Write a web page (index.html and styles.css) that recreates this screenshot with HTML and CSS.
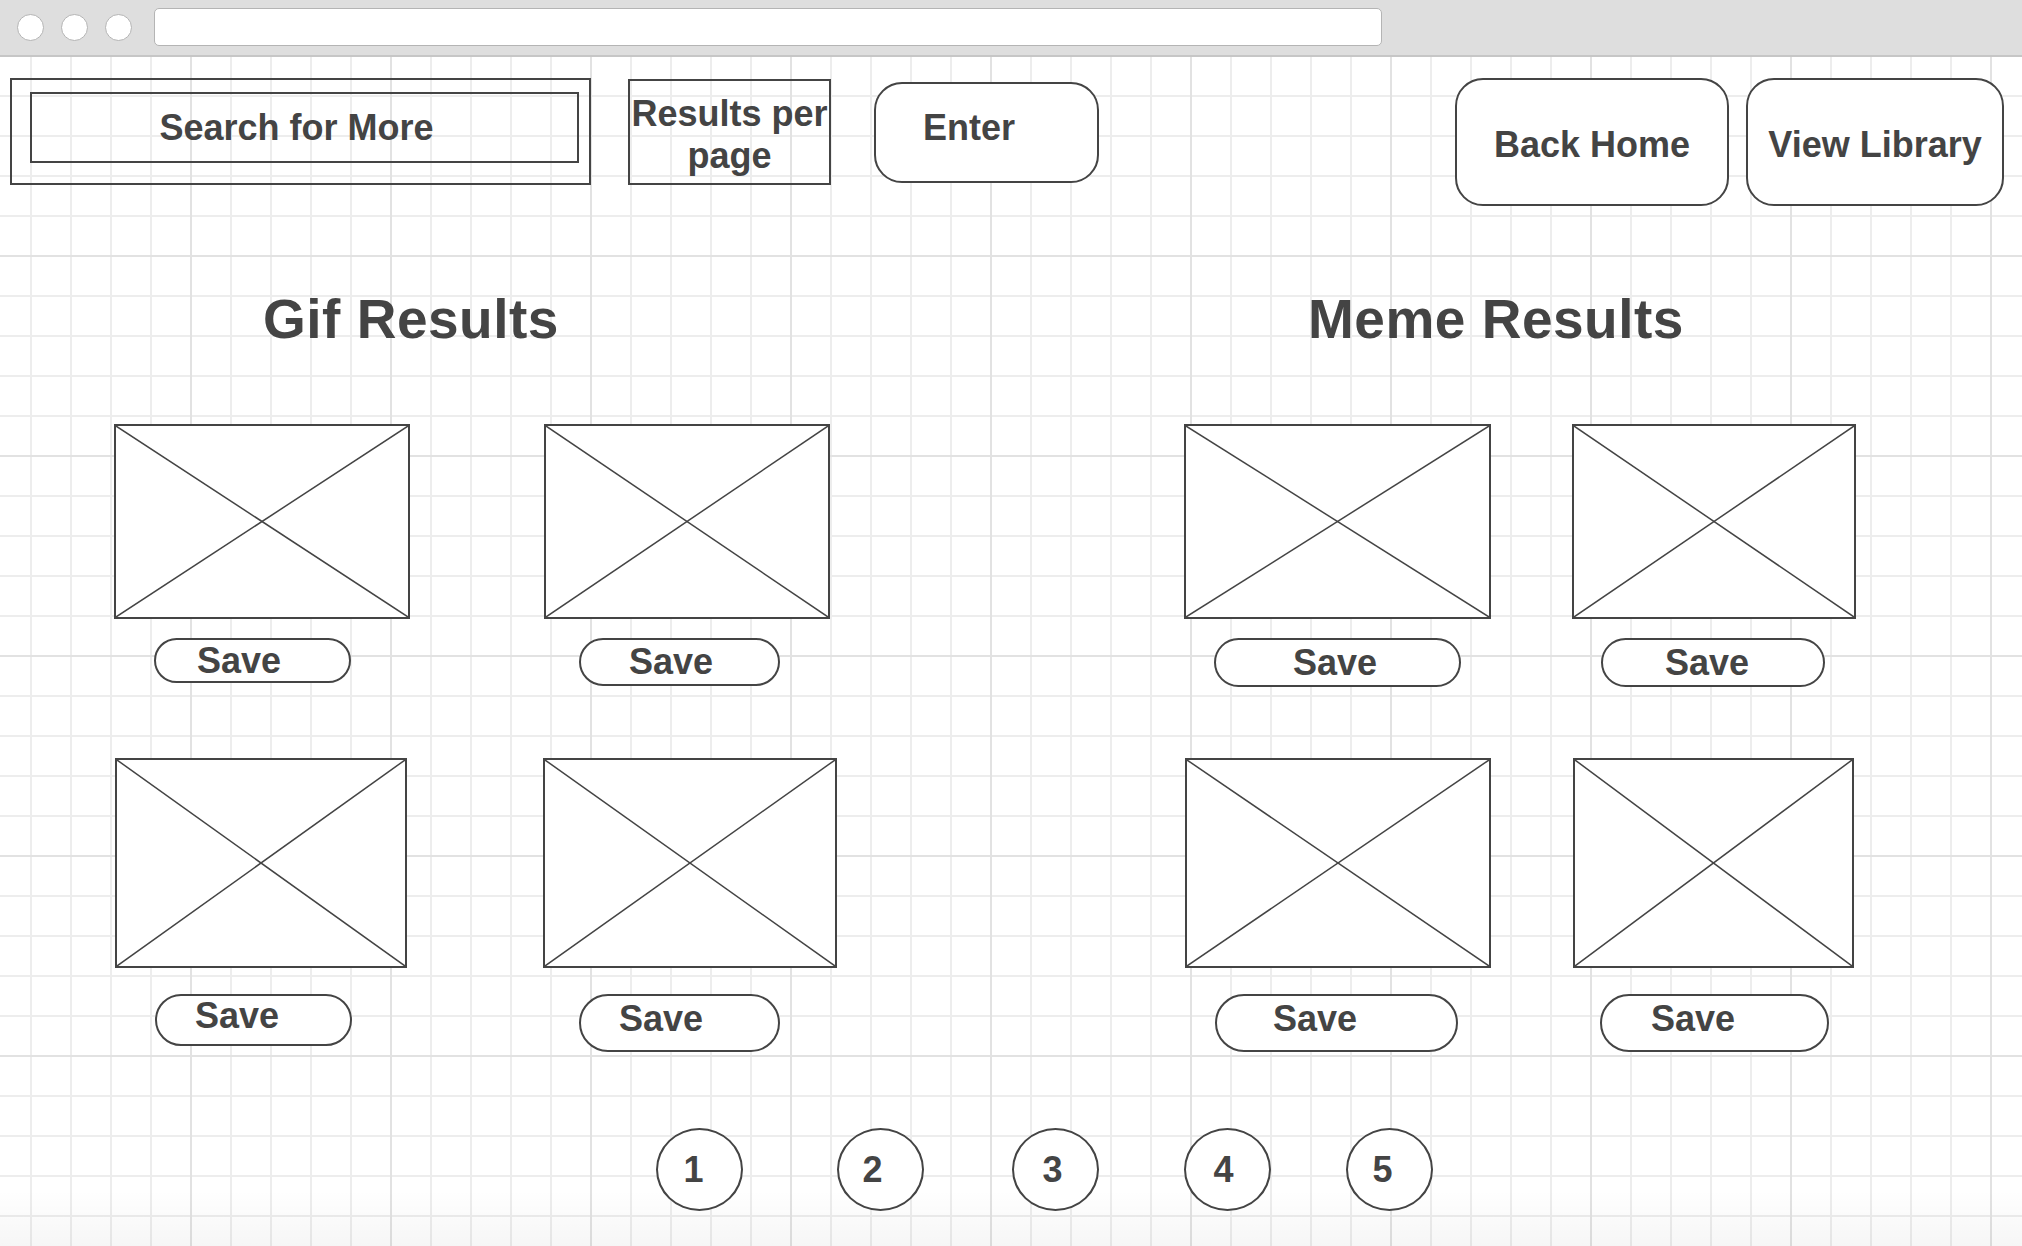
FILE: index.html
```html
<!DOCTYPE html>
<html lang="en">
<head>
<meta charset="utf-8">
<title>Search Results Wireframe</title>
<link rel="stylesheet" href="styles.css">
</head>
<body>
<div class="chrome">
  <span class="dot"></span><span class="dot"></span><span class="dot"></span>
  <div class="url"></div>
</div>
<main class="page">
  <header class="toolbar">
    <div class="search"><div class="search-inner">Search for More</div></div>
    <div class="rpp">Results per<br>page</div>
    <div class="btn enter">Enter</div>
    <div class="btn home">Back Home</div>
    <div class="btn library">View Library</div>
  </header>

  <div class="results">
    <section class="section gif">
      <h2 class="heading">Gif Results</h2>
      <div class="cards">
        <div class="card r1 g11">
          <div class="ph"><svg viewBox="0 0 100 100" preserveAspectRatio="none"><line x1="0" y1="0" x2="100" y2="100"/><line x1="100" y1="0" x2="0" y2="100"/></svg></div>
          <div class="save">Save</div>
        </div>
        <div class="card r1 g12">
          <div class="ph"><svg viewBox="0 0 100 100" preserveAspectRatio="none"><line x1="0" y1="0" x2="100" y2="100"/><line x1="100" y1="0" x2="0" y2="100"/></svg></div>
          <div class="save">Save</div>
        </div>
        <div class="card r2 g21">
          <div class="ph"><svg viewBox="0 0 100 100" preserveAspectRatio="none"><line x1="0" y1="0" x2="100" y2="100"/><line x1="100" y1="0" x2="0" y2="100"/></svg></div>
          <div class="save">Save</div>
        </div>
        <div class="card r2 g22">
          <div class="ph"><svg viewBox="0 0 100 100" preserveAspectRatio="none"><line x1="0" y1="0" x2="100" y2="100"/><line x1="100" y1="0" x2="0" y2="100"/></svg></div>
          <div class="save">Save</div>
        </div>
      </div>
    </section>

    <section class="section meme">
      <h2 class="heading">Meme Results</h2>
      <div class="cards">
        <div class="card r1 m11">
          <div class="ph"><svg viewBox="0 0 100 100" preserveAspectRatio="none"><line x1="0" y1="0" x2="100" y2="100"/><line x1="100" y1="0" x2="0" y2="100"/></svg></div>
          <div class="save">Save</div>
        </div>
        <div class="card r1 m12">
          <div class="ph"><svg viewBox="0 0 100 100" preserveAspectRatio="none"><line x1="0" y1="0" x2="100" y2="100"/><line x1="100" y1="0" x2="0" y2="100"/></svg></div>
          <div class="save">Save</div>
        </div>
        <div class="card r2 m21">
          <div class="ph"><svg viewBox="0 0 100 100" preserveAspectRatio="none"><line x1="0" y1="0" x2="100" y2="100"/><line x1="100" y1="0" x2="0" y2="100"/></svg></div>
          <div class="save">Save</div>
        </div>
        <div class="card r2 m22">
          <div class="ph"><svg viewBox="0 0 100 100" preserveAspectRatio="none"><line x1="0" y1="0" x2="100" y2="100"/><line x1="100" y1="0" x2="0" y2="100"/></svg></div>
          <div class="save">Save</div>
        </div>
      </div>
    </section>
  </div>

  <nav class="pager">
    <span class="pg">1</span>
    <span class="pg">2</span>
    <span class="pg">3</span>
    <span class="pg">4</span>
    <span class="pg">5</span>
  </nav>
</main>
</body>
</html>
```

FILE: styles.css
```css
* { box-sizing: border-box; }

html, body {
  margin: 0;
  padding: 0;
}

body {
  width: 2022px;
  height: 1246px;
  overflow: hidden;
  font-family: "Liberation Sans", Arial, Helvetica, sans-serif;
  font-weight: 700;
  color: #444444;
  background: #ffffff;
}

/* ---------- browser chrome ---------- */
.chrome {
  height: 57px;
  background: #dedede;
  border-bottom: 2px solid #c6c6c6;
  display: flex;
  align-items: center;
  padding: 7px 0 8px 17px;
}

.dot {
  width: 27px;
  height: 27px;
  border-radius: 50%;
  background: #ffffff;
  border: 1.5px solid #b4b4b4;
  margin-right: 17px;
  flex: none;
}
.dot:nth-child(3) { margin-right: 22px; }

.url {
  width: 1228px;
  height: 38px;
  background: #ffffff;
  border: 1.5px solid #b4b4b4;
  border-radius: 5px;
}

/* ---------- page canvas ---------- */
.page {
  height: 1189px;
  background-color: #ffffff;
  background-image:
    linear-gradient(to bottom, rgba(0,0,0,0) 0, rgba(0,0,0,0) calc(100% - 56px), rgba(0,0,0,0.035) 100%),
    linear-gradient(to right, #e2e2e2 2px, transparent 2px),
    linear-gradient(to bottom, #e2e2e2 2px, transparent 2px),
    linear-gradient(to right, #ededed 2px, transparent 2px),
    linear-gradient(to bottom, #ededed 2px, transparent 2px);
  background-size: 100% 100%, 200px 200px, 200px 200px, 40px 40px, 40px 40px;
  background-position: 0 0, -10px -2px, -10px -2px, -10px -2px, -10px -2px;
}

/* ---------- toolbar ---------- */
.toolbar {
  display: flex;
  align-items: flex-start;
  padding: 21px 18px 0 10px;
  font-size: 36px;
}

.search {
  width: 581px;
  height: 107px;
  border: 2px solid #444444;
  padding: 12px 10px 20px 18px;
}

.search-inner {
  height: 100%;
  border: 2px solid #444444;
  display: flex;
  align-items: center;
  justify-content: center;
  padding-right: 16px;
}

.rpp {
  width: 203px;
  height: 106px;
  margin-left: 37px;
  margin-top: 1px;
  border: 2px solid #444444;
  display: flex;
  align-items: center;
  justify-content: center;
  text-align: center;
  line-height: 42px;
  padding-top: 6px;
  white-space: nowrap;
}

.btn {
  border: 2px solid #444444;
  border-radius: 28px;
  display: flex;
  align-items: center;
  justify-content: center;
  white-space: nowrap;
  background: #ffffff;
}

.enter {
  width: 225px;
  height: 101px;
  margin-left: 43px;
  margin-top: 4px;
  padding: 0 35px 9px 0;
}

.home {
  width: 274px;
  height: 128px;
  margin-left: auto;
  padding-top: 5px;
}

.library {
  width: 258px;
  height: 128px;
  margin-left: 17px;
  padding-top: 5px;
}

/* ---------- results ---------- */
.results {
  display: flex;
  padding-left: 114px;
}

.section.gif { width: 1070px; }
.section.meme { flex: 1; }

.heading {
  margin: 87px 0 0;
  font-size: 55px;
  line-height: 53px;
  letter-spacing: 0.5px;
  font-weight: 700;
  white-space: nowrap;
}
.gif .heading { margin-left: 149px; }
.meme .heading { margin-left: 124px; }

.cards {
  display: grid;
  grid-template-rows: 334px 300px;
  margin-top: 78px;
}
.gif .cards { grid-template-columns: 430px 1fr; }
.meme .cards { grid-template-columns: 388px 1fr; }

.card {
  display: flex;
  flex-direction: column;
  align-items: flex-start;
  margin-left: var(--x, 0px);
}

.ph {
  width: var(--w);
  border: 2px solid #444444;
  background: #ffffff;
}
.ph svg {
  display: block;
  width: 100%;
  height: 100%;
}
.ph line {
  stroke: #444444;
  stroke-width: 1.5;
  vector-effect: non-scaling-stroke;
}

.r1 .ph { height: 195px; }
.r2 .ph { height: 210px; }

.save {
  margin-left: var(--sx);
  width: var(--sw);
  height: var(--sh);
  padding-left: var(--tp);
  border: 2px solid #444444;
  border-radius: 30px;
  background: #ffffff;
  display: flex;
  align-items: center;
  font-size: 36px;
}
.r1 .save { margin-top: 19px; }
.r2 .save { margin-top: 26px; padding-bottom: 8px; }

.g11 { --w: 296px; --sx: 40px; --sw: 197px; --sh: 45px; --tp: 41px; }
.g12 { --w: 286px; --sx: 35px; --sw: 201px; --sh: 48px; --tp: 48px; }
.g21 { --x: 1px; --w: 292px; --sx: 40px; --sw: 197px; --sh: 52px; --tp: 38px; }
.g22 { --x: -1px; --w: 294px; --sx: 36px; --sw: 201px; --sh: 58px; --tp: 38px; }

.m11 { --w: 307px; --sx: 30px; --sw: 247px; --sh: 49px; --tp: 77px; }
.m12 { --w: 284px; --sx: 29px; --sw: 224px; --sh: 49px; --tp: 62px; }
.m21 { --x: 1px; --w: 306px; --sx: 30px; --sw: 243px; --sh: 58px; --tp: 56px; }
.m22 { --x: 1px; --w: 281px; --sx: 27px; --sw: 229px; --sh: 58px; --tp: 49px; }

/* ---------- pager ---------- */
.pager {
  display: flex;
  padding-left: 656px;
  margin-top: 70px;
}

.pg {
  width: 87px;
  height: 83px;
  border: 2px solid #444444;
  border-radius: 50%;
  display: flex;
  align-items: center;
  justify-content: center;
  padding-right: 12px;
  font-size: 36px;
  background: #ffffff;
}
.pg:nth-child(2) { margin-left: 94px; padding-right: 16px; }
.pg:nth-child(3) { margin-left: 88px; padding-right: 6px; }
.pg:nth-child(4) { margin-left: 85px; padding-right: 8px; }
.pg:nth-child(5) { margin-left: 75px; padding-right: 14px; }
```
